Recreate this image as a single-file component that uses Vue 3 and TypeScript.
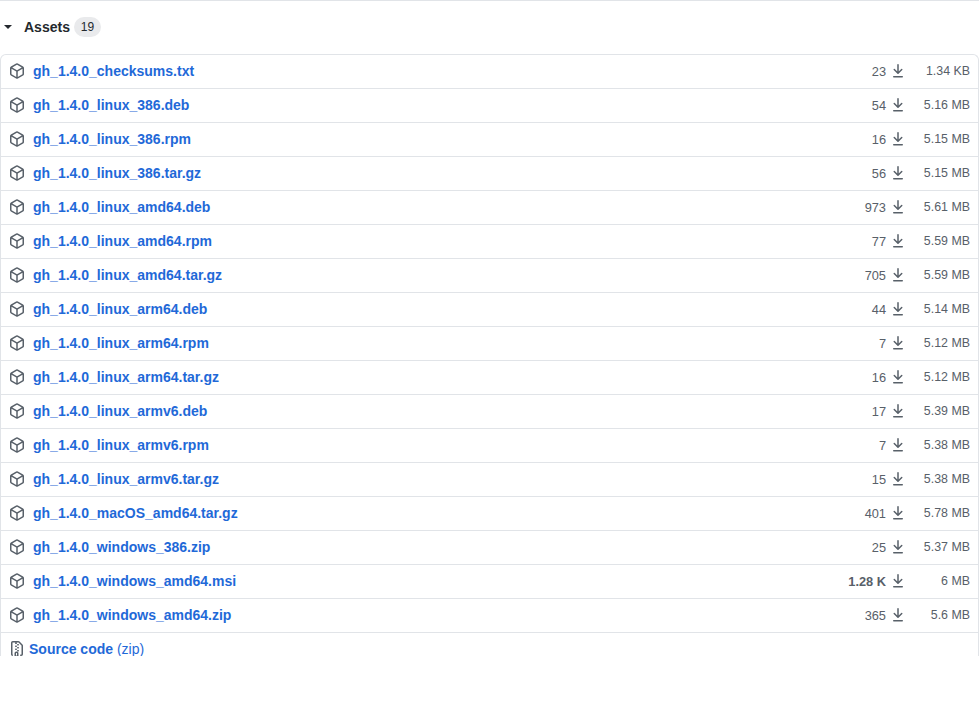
<script setup lang="ts">
interface Asset { name: string; count: string; size: string; hot?: boolean }
const assets: Asset[] = [
  { name: 'gh_1.4.0_checksums.txt', count: '23', size: '1.34 KB' },
  { name: 'gh_1.4.0_linux_386.deb', count: '54', size: '5.16 MB' },
  { name: 'gh_1.4.0_linux_386.rpm', count: '16', size: '5.15 MB' },
  { name: 'gh_1.4.0_linux_386.tar.gz', count: '56', size: '5.15 MB' },
  { name: 'gh_1.4.0_linux_amd64.deb', count: '973', size: '5.61 MB' },
  { name: 'gh_1.4.0_linux_amd64.rpm', count: '77', size: '5.59 MB' },
  { name: 'gh_1.4.0_linux_amd64.tar.gz', count: '705', size: '5.59 MB' },
  { name: 'gh_1.4.0_linux_arm64.deb', count: '44', size: '5.14 MB' },
  { name: 'gh_1.4.0_linux_arm64.rpm', count: '7', size: '5.12 MB' },
  { name: 'gh_1.4.0_linux_arm64.tar.gz', count: '16', size: '5.12 MB' },
  { name: 'gh_1.4.0_linux_armv6.deb', count: '17', size: '5.39 MB' },
  { name: 'gh_1.4.0_linux_armv6.rpm', count: '7', size: '5.38 MB' },
  { name: 'gh_1.4.0_linux_armv6.tar.gz', count: '15', size: '5.38 MB' },
  { name: 'gh_1.4.0_macOS_amd64.tar.gz', count: '401', size: '5.78 MB' },
  { name: 'gh_1.4.0_windows_386.zip', count: '25', size: '5.37 MB' },
  { name: 'gh_1.4.0_windows_amd64.msi', count: '1.28 K', size: '6 MB', hot: true },
  { name: 'gh_1.4.0_windows_amd64.zip', count: '365', size: '5.6 MB' },
]
</script>

<template>
  <div class="page">
    <div class="heading">
      <span class="caret"></span>
      <span class="title">Assets</span>
      <span class="counter">19</span>
    </div>
    <div class="clip">
      <div class="box">
        <div v-for="a in assets" :key="a.name" class="row">
          <svg class="pkg" viewBox="0 0 16 16" width="16" height="16" fill="currentColor">
            <path fill-rule="evenodd" d="M8.878.392a1.75 1.75 0 00-1.756 0l-5.25 3.045A1.75 1.75 0 001 4.951v6.098c0 .624.332 1.2.872 1.514l5.25 3.045a1.75 1.75 0 001.756 0l5.25-3.045c.54-.313.872-.89.872-1.514V4.951c0-.624-.332-1.2-.872-1.514L8.878.392zM7.875 1.69a.25.25 0 01.25 0l4.63 2.685L8 7.133 3.245 4.375l4.63-2.685zM2.5 5.677v5.372c0 .09.047.171.125.216l4.625 2.683V8.432L2.5 5.677zm6.25 8.271l4.625-2.683a.25.25 0 00.125-.216V5.677L8.75 8.432v5.516z" />
          </svg>
          <a class="link" href="#">{{ a.name }}</a>
          <span class="count" :class="{ hot: a.hot }">{{ a.count }}</span>
          <svg class="dl" viewBox="0 0 16 16" width="16" height="16" fill="currentColor">
            <path fill-rule="evenodd" d="M7.47 10.78a.75.75 0 001.06 0l3.75-3.75a.75.75 0 00-1.06-1.06L8.75 8.44V1.75a.75.75 0 00-1.5 0v6.69L4.78 5.97a.75.75 0 00-1.06 1.06l3.75 3.75zM3.75 13a.75.75 0 000 1.5h8.5a.75.75 0 000-1.5h-8.5z" />
          </svg>
          <span class="size">{{ a.size }}</span>
        </div>
        <div class="row source">
          <svg class="zip" viewBox="0 0 16 16" width="16" height="16" fill="currentColor">
            <path fill-rule="evenodd" d="M3.5 1.75a.25.25 0 01.25-.25h3a.75.75 0 000 1.5h.5a.75.75 0 000-1.5h2.086a.25.25 0 01.177.073l2.914 2.914a.25.25 0 01.073.177v8.586a.25.25 0 01-.25.25h-.5a.75.75 0 000 1.5h.5A1.75 1.75 0 0014 13.25V4.664c0-.464-.184-.909-.513-1.237L10.573.513A1.75 1.75 0 009.336 0H3.75A1.75 1.75 0 002 1.75v11.5c0 .649.353 1.214.874 1.515a.75.75 0 10.752-1.298.25.25 0 01-.126-.217V1.75zM8.75 3a.75.75 0 000 1.5h.5a.75.75 0 000-1.5h-.5zM6 5.25a.75.75 0 01.75-.75h.5a.75.75 0 010 1.5h-.5A.75.75 0 016 5.25zm2 1.5A.75.75 0 018.75 6h.5a.75.75 0 010 1.5h-.5A.75.75 0 018 6.75zm-1.25.75a.75.75 0 000 1.5h.5a.75.75 0 000-1.5h-.5zM8 9.75A.75.75 0 018.75 9h.5a.75.75 0 010 1.5h-.5A.75.75 0 018 9.75zm-.75.75a1.75 1.75 0 00-1.75 1.75v3c0 .414.336.75.75.75h2.5a.75.75 0 00.75-.75v-3a1.75 1.75 0 00-1.75-1.75h-.5zM7 12.25a.25.25 0 01.25-.25h.5a.25.25 0 01.25.25v2.25H7v-2.25z" />
          </svg>
          <a class="link" href="#">Source code</a>
          <span class="paren">&nbsp;(zip)</span>
        </div>
      </div>
    </div>
  </div>
</template>

<style scoped>
.page {
  width: 979px;
  height: 701px;
  box-sizing: border-box;
  border-top: 1px solid #e1e4e8;
  background: #fff;
  font-family: "Liberation Sans", Arial, sans-serif;
  color: #24292e;
  overflow: hidden;
}
.heading {
  display: flex;
  align-items: center;
  height: 53px;
  box-sizing: border-box;
  padding: 0 0 1px 4px;
}
.caret {
  width: 0;
  height: 0;
  border-top: 4px solid #24292e;
  border-left: 4px solid transparent;
  border-right: 4px solid transparent;
  margin-right: 12px;
}
.title {
  font-size: 14px;
  font-weight: 700;
}
.counter {
  margin-left: 4px;
  min-width: 27px;
  height: 20px;
  line-height: 20px;
  box-sizing: border-box;
  text-align: center;
  border-radius: 10px;
  background: #e9eaec;
  font-size: 12px;
}
.clip {
  height: 602px;
  overflow: hidden;
}
.box {
  box-sizing: border-box;
  border: 1px solid #e1e4e8;
  border-bottom: 0;
  border-radius: 6px 6px 0 0;
}
.row {
  display: flex;
  align-items: center;
  height: 34px;
  box-sizing: border-box;
  padding: 0 8px 1px;
  border-bottom: 1px solid #e1e4e8;
}
.row.source {
  border-bottom: 0;
  padding-bottom: 2px;
}
.pkg {
  color: #586069;
  margin-right: 8px;
  flex: none;
}
.zip {
  color: #586069;
  margin-right: 4px;
  flex: none;
}
.link {
  font-size: 14px;
  font-weight: 700;
  color: #1f69d8;
  text-decoration: none;
}
.paren {
  font-size: 14px;
  color: #1f69d8;
}
.count {
  margin-left: auto;
  font-size: 12.8px;
  color: #586069;
}
.count.hot {
  font-weight: 700;
}
.dl {
  color: #586069;
  margin-left: 4px;
  flex: none;
}
.size {
  width: 64px;
  text-align: right;
  font-size: 12.4px;
  color: #586069;
}
</style>
